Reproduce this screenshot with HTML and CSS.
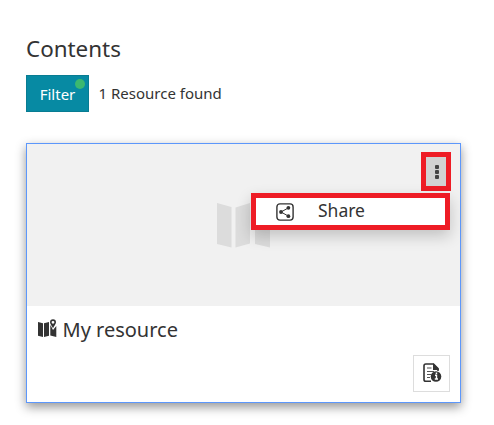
FILE: index.html
```html
<!DOCTYPE html>
<html lang="en">
<head>
<meta charset="utf-8">
<title>Contents</title>
<link rel="stylesheet" href="styles.css">
</head>
<body>
<main class="page">
  <h1 class="title">Contents</h1>
  <div class="toolbar">
    <button class="filter">Filter<span class="badge"></span></button>
    <span class="count">1 Resource found</span>
  </div>
  <article class="card">
    <div class="thumb">
      <svg class="map" width="53" height="45" viewBox="0 0 53 45"><path d="M0 0L14.500 4V44.500L0 41ZM18.500 4.500L33 0V40.500L18.500 44.500ZM38 0L53 4V44.500L38 41Z"/></svg>
      <button class="more" aria-label="More"><i></i><i></i><i></i></button>
      <div class="menu">
        <svg class="share" width="18" height="18" viewBox="0 0 18 18"><rect x=".9" y=".9" width="16.200" height="16.200" rx="3"/><path d="M12.500 4.800L5 9L12.500 13.200"/><g><circle cx="12.400" cy="4.800" r="1.900"/><circle cx="5" cy="9" r="1.900"/><circle cx="12.400" cy="13.200" r="1.900"/></g></svg>
        <span>Share</span>
      </div>
    </div>
    <div class="body">
      <h2 class="name">
        <svg width="19" height="19" viewBox="0 0 19 19"><path d="M0 3L5 4.200V18L0 16.800ZM6 4.200L11 3V16.800L6 18ZM12.300 6L13.500 8L15 11L18.300 7V18L12.300 16.500Z"/><path fill-rule="evenodd" d="M15 0.300C17 .300 18 1.600 18 3.300C18 5 16.200 7 15 9.300C13.800 7 12 5 12 3.300C12 1.600 13 .300 15 .300ZM15 1.900A1.400 1.400 0 1 0 15 4.700A1.400 1.400 0 1 0 15 1.900Z"/></svg>
        <span>My resource</span>
      </h2>
      <button class="info" aria-label="Details">
        <svg width="19" height="20" viewBox="0 0 19 20"><path class="line" d="M8 18.200H2.800Q1 18.200 1 16.400V2.800Q1 1 2.800 1H10.500L15 5.500V8"/><path class="fill" d="M10 .300L15.800 6V7H10Z"/><path class="rule" d="M4 5H8.500M4 8.500H11M4 11.500H8M4 14.500H7"/><circle class="fill" cx="13" cy="13.500" r="5.300"/><path class="mark" d="M12 12.300H13.500V16M11.800 16H15M12.700 10.300H14.200"/></svg>
      </button>
    </div>
  </article>
</main>
</body>
</html>
```

FILE: styles.css
```css
* { box-sizing: border-box; }
body { margin: 0; background: #fff; color: #333; font-family: "Noto Sans", sans-serif; }
.page { padding: 33px 33px 22px 26px; }
.title { margin: 0; font-size: 22.400px; line-height: 32px; font-weight: 400; }
.toolbar { display: flex; align-items: center; gap: 9.500px; margin-top: 10px; height: 37px; }
.filter { position: relative; width: 63px; height: 37px; padding: 0; border: 1px solid #087c92; background: #078aa3; color: #fff; font: 15px "Noto Sans", sans-serif; }
.badge { position: absolute; top: 3px; right: 3px; width: 10px; height: 10px; border-radius: 50%; background: #3cb870; }
.count { margin-top: -2px; font-size: 15px; line-height: 20px; }
.card { width: 435px; height: 260px; margin-top: 31px; border: 1px solid #5c97fb; background: #fff; box-shadow: 0 4px 10px rgba(0,0,0,.42); }
.thumb { position: relative; display: flex; align-items: center; justify-content: center; height: 162px; background: #f1f1f1; }
.map { fill: #dcdcdc; }
.more { position: absolute; top: 8px; right: 9px; display: flex; flex-direction: column; align-items: center; justify-content: center; gap: 1px; width: 30px; height: 39px; padding: 0 0 0 2px; border: 5px solid #ee1c25; background: #d2d2d2; }
.more i { width: 4px; height: 4px; border-radius: 1px; background: #444; }
.menu { position: absolute; top: 49px; right: 10px; display: flex; align-items: center; gap: 24px; width: 199px; height: 37px; padding: 0 20px 3px; border: 5px solid #ee1c25; background: #fff; box-shadow: 0 6px 15px rgba(0,0,0,.2); font-size: 17.500px; }
.share { margin-top: 3px; stroke: #333; fill: none; stroke-width: 1.4; }
.share path { stroke-width: 1; }
.share g { fill: #333; stroke: none; }
.body { display: flex; flex-direction: column; justify-content: space-between; height: 96px; padding: 10px 10px 10px 11px; }
.name { display: flex; align-items: center; gap: 5.500px; margin: 0; font-size: 20px; line-height: 28px; font-weight: 400; }
.name svg { fill: #333; margin-top: -4px; }
.info { display: flex; align-items: center; justify-content: center; align-self: flex-end; width: 37px; height: 37px; padding: 0 0 2px 2px; border: 1px solid #ddd; background: #fff; }
.info path { fill: none; stroke: #333; }
.info .line { stroke-width: 1.6; }
.info .rule { stroke: #555; stroke-width: 1.2; }
.info .fill { fill: #333; stroke: none; }
.info .mark { stroke: #fff; stroke-width: 1.4; }
```
